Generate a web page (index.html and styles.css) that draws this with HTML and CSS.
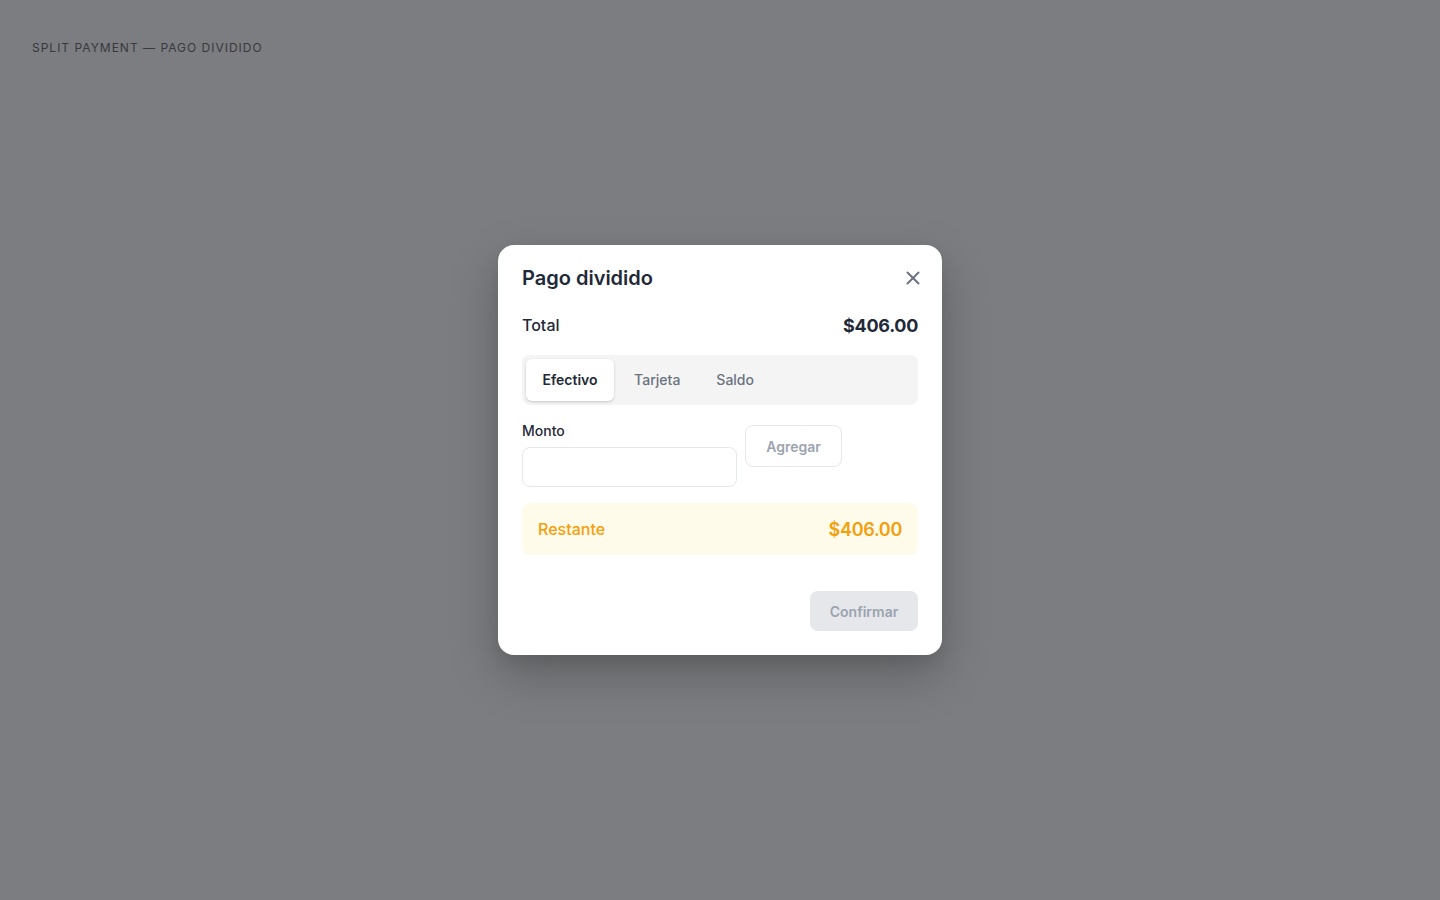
FILE: index.html
```html
<!DOCTYPE html>
<html lang="es">
<head>
<meta charset="utf-8">
<title>Pago dividido</title>
<link rel="stylesheet" href="styles.css">
</head>
<body>
<div class="page">
  <div class="page-label">Split payment — Pago dividido</div>
  <div class="overlay">
    <div class="modal">
      <div class="modal-header">
        <h2 class="modal-title">Pago dividido</h2>
        <button class="close-btn" aria-label="Cerrar">
          <svg width="22" height="22" viewBox="0 0 24 24" fill="none" stroke="currentColor" stroke-width="2.2" stroke-linecap="round" stroke-linejoin="round"><path d="M18 6 6 18"/><path d="m6 6 12 12"/></svg>
        </button>
      </div>
      <div class="total-row">
        <span class="total-label">Total</span>
        <span class="total-value">$406.00</span>
      </div>
      <div class="tabs">
        <button class="tab active">Efectivo</button>
        <button class="tab">Tarjeta</button>
        <button class="tab">Saldo</button>
      </div>
      <div class="form-row">
        <div class="field">
          <label class="field-label">Monto</label>
          <input class="field-input" type="text">
        </div>
        <button class="add-btn">Agregar</button>
      </div>
      <div class="remaining">
        <span class="remaining-label">Restante</span>
        <span class="remaining-value">$406.00</span>
      </div>
      <div class="modal-footer">
        <button class="confirm-btn">Confirmar</button>
      </div>
    </div>
  </div>
</div>
</body>
</html>
```
FILE: styles.css
```css
* { box-sizing: border-box; }
html, body {
  margin: 0;
  padding: 0;
  width: 100%;
  height: 100%;
}
body {
  background: #7c7d80;
  font-family: Inter, "Noto Sans", sans-serif;
  color: #1f2937;
}
.page {
  width: 1440px;
  height: 900px;
  display: flex;
  flex-direction: column;
}
.page-label {
  padding: 40px 32px 0;
  font-size: 12px;
  line-height: 16px;
  letter-spacing: 1px;
  text-transform: uppercase;
  color: #38393d;
}
.overlay {
  flex: 1;
  display: flex;
  justify-content: center;
  padding-top: 189px;
}
.modal {
  width: 444px;
  height: 410px;
  background: #ffffff;
  border-radius: 16px;
  padding: 19px 24px 24px;
  box-shadow: 0 20px 50px rgba(0, 0, 0, 0.22), 0 8px 16px rgba(0, 0, 0, 0.08);
  display: flex;
  flex-direction: column;
}
.modal-header {
  display: flex;
  justify-content: space-between;
  align-items: center;
  height: 28px;
}
.modal-title {
  margin: 0;
  font-size: 20px;
  line-height: 28px;
  font-weight: 600;
  color: #1f2937;
}
.close-btn {
  border: 0;
  background: none;
  padding: 0;
  margin-right: -6px;
  margin-top: -1px;
  width: 22px;
  height: 22px;
  color: #6b7280;
  display: flex;
  align-items: center;
  justify-content: center;
  cursor: pointer;
}
.total-row {
  margin-top: 19px;
  display: flex;
  justify-content: space-between;
  align-items: center;
  height: 28px;
}
.total-label {
  font-size: 16px;
  font-weight: 500;
  color: #1f2937;
}
.total-value {
  font-size: 18px;
  font-weight: 700;
  letter-spacing: -0.3px;
  color: #1f2937;
}
.tabs {
  margin-top: 16px;
  background: #f4f4f5;
  border-radius: 8px;
  padding: 4px;
  display: flex;
  gap: 4px;
}
.tab {
  font-family: inherit;
  border: 0;
  background: transparent;
  padding: 11px 16px;
  font-size: 14px;
  line-height: 20px;
  font-weight: 500;
  color: #6b7280;
  border-radius: 6px;
  cursor: pointer;
}
.tab.active {
  background: #ffffff;
  color: #1f2937;
  font-weight: 600;
  padding: 11px 16.5px;
  box-shadow: 0 1px 3px rgba(0, 0, 0, 0.12), 0 1px 2px rgba(0, 0, 0, 0.08);
}
.form-row {
  margin-top: 16px;
  display: flex;
  align-items: flex-start;
  gap: 8px;
}
.field {
  width: 215px;
  display: flex;
  flex-direction: column;
}
.field-label {
  font-size: 14px;
  line-height: 20px;
  font-weight: 500;
  color: #1f2937;
}
.field-input {
  margin-top: 6px;
  height: 40px;
  border: 1px solid #e5e7eb;
  border-radius: 8px;
  padding: 0 12px;
  font-family: inherit;
  font-size: 14px;
  outline: none;
  background: #fff;
}
.add-btn {
  margin-top: 4px;
  height: 42px;
  width: 97px;
  font-family: inherit;
  background: #ffffff;
  border: 1px solid #e5e7eb;
  border-radius: 8px;
  font-size: 14px;
  font-weight: 600;
  color: #9ca3af;
  cursor: pointer;
}
.remaining {
  margin-top: 16px;
  height: 52px;
  background: #fffbeb;
  border-radius: 8px;
  padding: 0 16px;
  display: flex;
  justify-content: space-between;
  align-items: center;
}
.remaining-label {
  font-size: 16px;
  font-weight: 500;
  color: #f59e0b;
}
.remaining-value {
  font-size: 18px;
  font-weight: 600;
  letter-spacing: -0.3px;
  color: #f59e0b;
}
.modal-footer {
  margin-top: 36px;
  display: flex;
  justify-content: flex-end;
}
.confirm-btn {
  height: 40px;
  width: 108px;
  font-family: inherit;
  background: #e5e7eb;
  border: 0;
  border-radius: 8px;
  font-size: 14px;
  font-weight: 600;
  color: #9ca3af;
  cursor: pointer;
}
```
